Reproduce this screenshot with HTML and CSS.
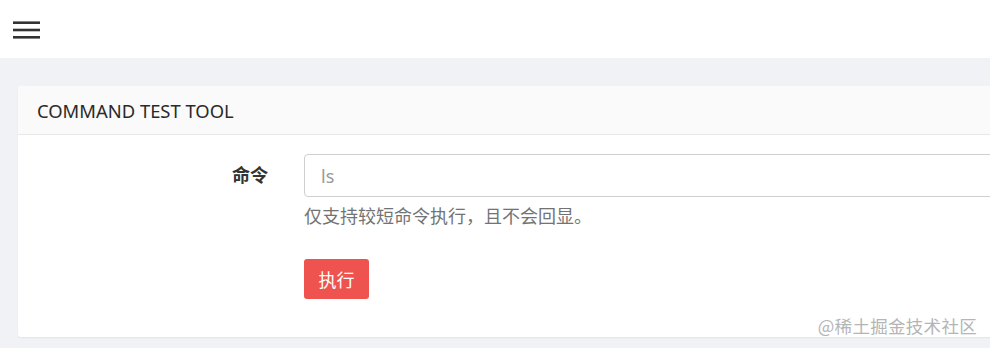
FILE: index.html
```html
<!DOCTYPE html>
<html lang="zh-CN">
<head>
<meta charset="utf-8">
<title>Command Test Tool</title>
<link rel="stylesheet" href="styles.css">
</head>
<body>
<header class="topbar">
  <button class="menu-btn" aria-label="menu">
    <svg width="28" height="18" viewBox="0 0 28 18"><rect x="0" y="0.4" width="27" height="2.6" fill="#333"/><rect x="0" y="7.7" width="27" height="2.6" fill="#333"/><rect x="0" y="15" width="27" height="2.6" fill="#333"/></svg>
  </button>
</header>
<main class="content">
  <section class="card">
    <div class="card-header">COMMAND TEST TOOL</div>
    <div class="card-body">
      <div class="form-row">
        <label class="form-label" for="cmd">命令</label>
        <div class="form-field">
          <input id="cmd" class="form-input" type="text" placeholder="ls">
          <p class="help">仅支持较短命令执行，且不会回显。</p>
        </div>
      </div>
      <div class="form-row actions">
        <div class="form-label"></div>
        <div class="form-field">
          <button class="btn-danger">执行</button>
        </div>
      </div>
    </div>
  </section>
</main>
<div class="watermark">@稀土掘金技术社区</div>
</body>
</html>
```
FILE: styles.css
```css
html, body {
  margin: 0;
  padding: 0;
}
body {
  width: 990px;
  height: 348px;
  overflow: hidden;
  background: #f0f2f5;
  font-family: "Noto Sans", "Noto Sans CJK SC", sans-serif;
  color: #333;
  position: relative;
}
.topbar {
  height: 58px;
  background: #fff;
  display: flex;
  align-items: center;
  padding-left: 13px;
}
.menu-btn {
  border: 0;
  background: transparent;
  padding: 0;
  margin-top: 1px;
  display: flex;
}
.content {
  padding: 28px 0 0 18px;
}
.card {
  background: #fff;
  border-radius: 3px;
  margin-right: -30px;
  height: 251px;
  box-shadow: 0 1px 2px rgba(0,0,0,0.06);
}
.card-header {
  height: 49px;
  box-sizing: border-box;
  background: #fafafa;
  border-bottom: 1px solid #e8e8e8;
  padding-left: 19px;
  display: flex;
  align-items: center;
  font-size: 18.4px;
  color: #2a2a2a;
  border-radius: 3px 3px 0 0;
}
.card-body {
  padding-top: 19px;
}
.form-row {
  display: flex;
}
.form-label {
  width: 250px;
  flex: none;
  text-align: right;
  font-weight: bold;
  font-size: 18px;
  line-height: 43px;
  color: #333;
}
.form-field {
  margin-left: 36px;
  flex: 1;
}
.form-input {
  display: block;
  width: 100%;
  height: 43px;
  box-sizing: border-box;
  border: 1px solid #cfcfcf;
  border-radius: 4px;
  padding: 0 16px;
  font-family: "Noto Sans", "Noto Sans CJK SC", sans-serif;
  font-size: 18px;
  color: #333;
  outline: none;
}
.form-input::placeholder {
  color: #999;
}
.help {
  margin: 7px 0 0;
  font-size: 18px;
  line-height: 24px;
  color: #737373;
}
.actions {
  margin-top: 31px;
}
.btn-danger {
  width: 65px;
  height: 40px;
  border: 0;
  border-radius: 3px;
  background: #ef5350;
  color: #fff;
  font-family: "Noto Sans CJK SC", sans-serif;
  font-size: 18px;
  padding: 0;
}
.watermark {
  position: absolute;
  right: 13px;
  top: 313px;
  font-family: "Noto Sans CJK SC", sans-serif;
  font-size: 17.5px;
  color: #b5b5b5;
  letter-spacing: 0.3px;
}
```
